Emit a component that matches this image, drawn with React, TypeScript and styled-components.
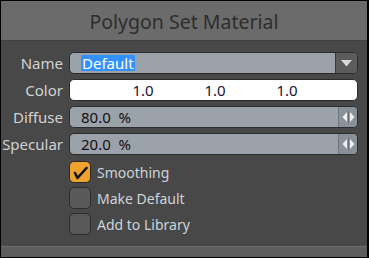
import styled, { createGlobalStyle } from "styled-components";

const GlobalStyle = createGlobalStyle`
  html, body {
    margin: 0;
    padding: 0;
    background: #000;
  }
  * {
    box-sizing: border-box;
  }
`;

const Frame = styled.div`
  width: 369px;
  height: 258px;
  border: 1px solid #000;
  border-right-width: 2px;
  display: flex;
  flex-direction: column;
  background-color: #484848;
  font-family: "Noto Sans", "Open Sans", sans-serif;
`;

const TitleBar = styled.div`
  height: 40px;
  display: flex;
  align-items: center;
  justify-content: center;
  padding-top: 1px;
  background-color: #6b6b6b;
  border-bottom: 1px solid #3e3e3e;
  color: #2e2e2e;
  font-size: 19.5px;
`;

const Body = styled.div`
  flex: 1;
  padding: 11px 9px 0 0;
  display: flex;
  flex-direction: column;
`;

const Form = styled.div`
  display: grid;
  grid-template-columns: 62px 289px;
  column-gap: 6px;
  row-gap: 5px;
  grid-auto-rows: 22px;
`;

const Label = styled.div`
  display: flex;
  align-items: center;
  justify-content: flex-end;
  color: #d2d2d2;
  font-size: 15px;
`;

const Field = styled.div<{ $light?: boolean }>`
  display: flex;
  align-items: stretch;
  border: 1px solid #2c2c2c;
  border-radius: 5px;
  overflow: hidden;
  background-color: ${(p) => (p.$light ? "#ffffff" : "#9ba2aa")};
  font-size: 15px;
  color: #101010;
`;

const Value = styled.div`
  flex: 1;
  display: flex;
  align-items: center;
  padding-left: 11px;
  white-space: pre;
`;

const Selected = styled.span`
  background-color: #3390ff;
  color: #ffffff;
  padding: 0 1px;
  line-height: 16px;
`;

const DropButton = styled.div`
  width: 22px;
  display: flex;
  align-items: center;
  justify-content: center;
  background-color: #5c5c5c;
  border-left: 1px solid #3a3a3a;
`;

const StepButton = styled.div`
  width: 19px;
  display: flex;
  align-items: center;
  justify-content: center;
  background-color: #8a9199;
  border-left: 1px solid #6f757c;
`;

const ColorValues = styled.div`
  flex: 1;
  display: grid;
  grid-template-columns: repeat(3, 72px);
  padding-left: 37px;
  align-items: center;
  color: #14143a;
`;

const ColorValue = styled.span`
  text-align: center;
`;

const Checks = styled.div`
  display: flex;
  flex-direction: column;
  gap: 4px;
  margin: 6px 0 0 68px;
`;

const CheckRow = styled.div`
  display: flex;
  align-items: center;
  gap: 6px;
  height: 22px;
  color: #cdd3da;
  font-size: 14px;
`;

const Box = styled.div<{ $checked?: boolean }>`
  width: 22px;
  height: 22px;
  border-radius: 5px;
  border: 1px solid #2c2c2c;
  background-color: ${(p) => (p.$checked ? "#f0a22e" : "#595959")};
  display: flex;
  align-items: center;
  justify-content: center;
`;

const Footer = styled.div`
  height: 11px;
  background-color: #5d5d5d;
  border-top: 1px solid #6a6a6a;
`;

function Stepper() {
  return (
    <StepButton>
      <svg width="13" height="12" viewBox="0 0 13 12">
        <path d="M5 1 L0.5 6 L5 11 Z" fill="#eef0f2" />
        <rect x="6" y="0" width="1" height="12" fill="#6c7279" />
        <path d="M8 1 L12.5 6 L8 11 Z" fill="#eef0f2" />
      </svg>
    </StepButton>
  );
}

export default function App() {
  return (
    <>
      <GlobalStyle />
      <Frame>
        <TitleBar>Polygon Set Material</TitleBar>
        <Body>
          <Form>
            <Label>Name</Label>
            <Field>
              <Value>
                <Selected>Default</Selected>
              </Value>
              <DropButton>
                <svg width="11" height="7" viewBox="0 0 11 7">
                  <path d="M0 0 H11 L5.5 6.5 Z" fill="#d8d8d8" />
                </svg>
              </DropButton>
            </Field>

            <Label>Color</Label>
            <Field $light>
              <ColorValues>
                <ColorValue>1.0</ColorValue>
                <ColorValue>1.0</ColorValue>
                <ColorValue>1.0</ColorValue>
              </ColorValues>
            </Field>

            <Label>Diffuse</Label>
            <Field>
              <Value>80.0  %</Value>
              <Stepper />
            </Field>

            <Label>Specular</Label>
            <Field>
              <Value>20.0  %</Value>
              <Stepper />
            </Field>
          </Form>

          <Checks>
            <CheckRow>
              <Box $checked>
                <svg width="16" height="16" viewBox="0 0 16 16">
                  <path
                    d="M3 9 L5.5 14 L14.5 4"
                    fill="none"
                    stroke="#111"
                    strokeWidth="2.6"
                    strokeLinejoin="round"
                    strokeLinecap="round"
                  />
                </svg>
              </Box>
              Smoothing
            </CheckRow>
            <CheckRow>
              <Box />
              Make Default
            </CheckRow>
            <CheckRow>
              <Box />
              Add to Library
            </CheckRow>
          </Checks>
        </Body>
        <Footer />
      </Frame>
    </>
  );
}
